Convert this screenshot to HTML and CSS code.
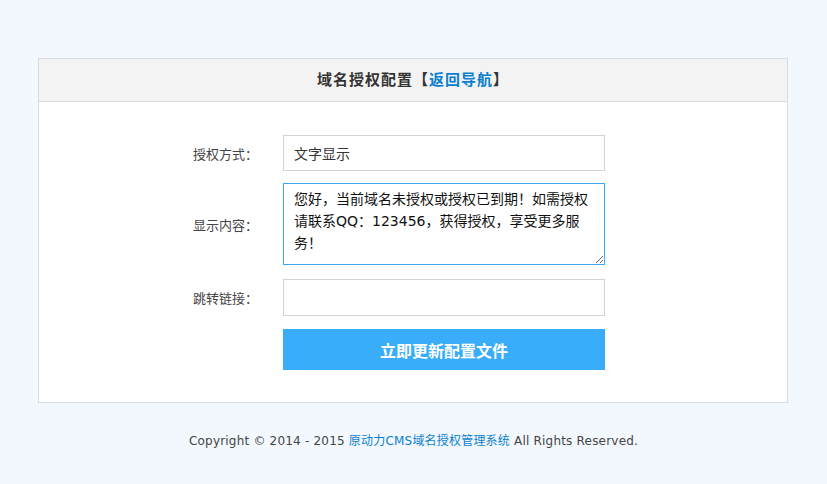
FILE: index.html
```html
<!DOCTYPE html>
<html lang="zh-CN">
  <head>
    <meta charset="utf-8" />
    <title>域名授权配置</title>
    <link rel="stylesheet" href="styles.css">
  </head>
  <body>
    <div class="panel">
      <div class="panel-head">域名授权配置【<a href="#">返回导航</a>】</div>
      <form class="panel-body">
        <div class="row">
          <label class="label">授权方式：</label>
          <input class="field" type="text" value="文字显示">
        </div>
        <div class="row">
          <label class="label">显示内容：</label>
          <textarea class="field area">您好，当前域名未授权或授权已到期！如需授权请联系QQ：123456，获得授权，享受更多服务！</textarea>
        </div>
        <div class="row row-link">
          <label class="label">跳转链接：</label>
          <input class="field" type="text" value="">
        </div>
        <div class="row row-btn">
          <span class="label"></span>
          <button type="button" class="submit">立即更新配置文件</button>
        </div>
      </form>
    </div>
    <p class="footer">Copyright © 2014 - 2015 <a href="#">原动力CMS域名授权管理系统</a> All Rights Reserved.</p>
  </body>
</html>
```

FILE: styles.css
```css
body {
  font-family: "DejaVu Sans", "Noto Sans CJK SC", sans-serif;
  margin: 0;
  padding: 58px 0 0;
  background-color: #f3f8fe;
  color: #333;
}

a {
  color: #0a7fd0;
  text-decoration: none;
}

.panel {
  width: 748px;
  margin: 0 0 0 38px;
  background: #fff;
  border: 1px solid #d8dce2;
}

.panel-head {
  height: 42px;
  line-height: 42px;
  text-align: center;
  font-size: 15px;
  font-weight: bold;
  letter-spacing: 1px;
  background: #f3f3f3;
  border-bottom: 1px solid #d8dce2;
}

.panel-body {
  padding: 33px 0 32px;
  display: flex;
  flex-direction: column;
  gap: 12px;
}

.row {
  display: flex;
  align-items: center;
}

.row-link {
  margin-top: 2px;
}

.row-btn {
  margin-top: 1px;
}

.label {
  width: 219px;
  text-align: right;
  font-size: 13px;
  color: #444;
  margin-right: 25px;
}

.field {
  box-sizing: border-box;
  width: 322px;
  height: 36px;
  padding: 0 10px;
  border: 1px solid #d4d4d4;
  font-family: "DejaVu Sans", "Noto Sans CJK SC", sans-serif;
  font-size: 14px;
  color: #333;
  outline: none;
  margin: 0;
}

.row-link .field {
  height: 37px;
}

.area {
  height: 82px;
  padding: 4px 10px;
  line-height: 22px;
  border-color: #3ea8f4;
  resize: vertical;
  color: #111;
}

.submit {
  width: 322px;
  height: 41px;
  margin: 0;
  border: none;
  background-color: #39adf9;
  color: #fff;
  font-family: "DejaVu Sans", "Noto Sans CJK SC", sans-serif;
  font-size: 16px;
  font-weight: bold;
  cursor: pointer;
}

.footer {
  margin: 28px 0 0;
  text-align: center;
  font-size: 12px;
  letter-spacing: 0.2px;
  color: #444;
}
```
